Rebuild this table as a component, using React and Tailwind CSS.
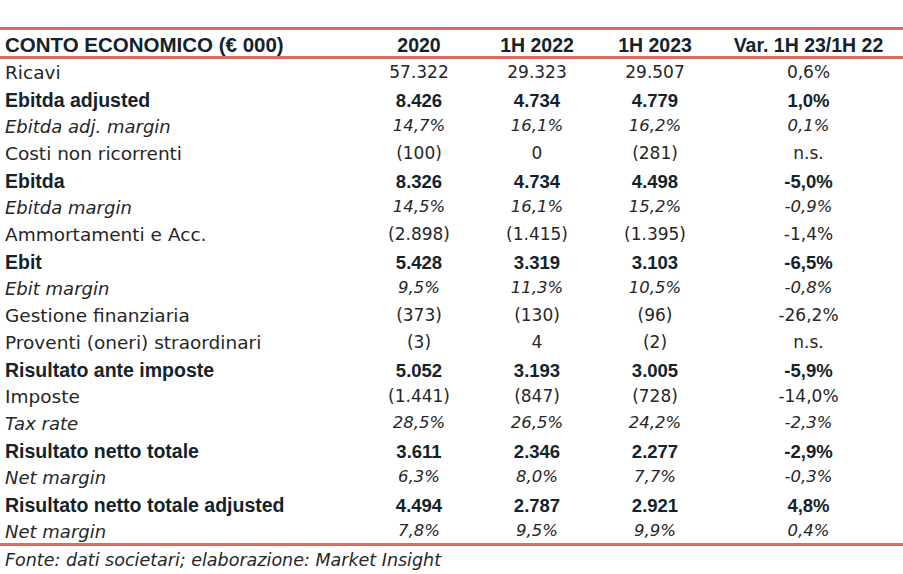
import React from "react";

const rows = [
  { l: "Ricavi", v: ["57.322", "29.323", "29.507", "0,6%"], t: "n" },
  { l: "Ebitda adjusted", v: ["8.426", "4.734", "4.779", "1,0%"], t: "b" },
  { l: "Ebitda adj. margin", v: ["14,7%", "16,1%", "16,2%", "0,1%"], t: "i" },
  { l: "Costi non ricorrenti", v: ["(100)", "0", "(281)", "n.s."], t: "n" },
  { l: "Ebitda", v: ["8.326", "4.734", "4.498", "-5,0%"], t: "b" },
  { l: "Ebitda margin", v: ["14,5%", "16,1%", "15,2%", "-0,9%"], t: "i" },
  { l: "Ammortamenti e Acc.", v: ["(2.898)", "(1.415)", "(1.395)", "-1,4%"], t: "n" },
  { l: "Ebit", v: ["5.428", "3.319", "3.103", "-6,5%"], t: "b" },
  { l: "Ebit margin", v: ["9,5%", "11,3%", "10,5%", "-0,8%"], t: "i" },
  { l: "Gestione finanziaria", v: ["(373)", "(130)", "(96)", "-26,2%"], t: "n" },
  { l: "Proventi (oneri) straordinari", v: ["(3)", "4", "(2)", "n.s."], t: "n" },
  { l: "Risultato ante imposte", v: ["5.052", "3.193", "3.005", "-5,9%"], t: "b" },
  { l: "Imposte", v: ["(1.441)", "(847)", "(728)", "-14,0%"], t: "n" },
  { l: "Tax rate", v: ["28,5%", "26,5%", "24,2%", "-2,3%"], t: "i" },
  { l: "Risultato netto totale", v: ["3.611", "2.346", "2.277", "-2,9%"], t: "b" },
  { l: "Net margin", v: ["6,3%", "8,0%", "7,7%", "-0,3%"], t: "i" },
  { l: "Risultato netto totale adjusted", v: ["4.494", "2.787", "2.921", "4,8%"], t: "b" },
  { l: "Net margin", v: ["7,8%", "9,5%", "9,9%", "0,4%"], t: "i" },
];

const rowCls = {
  n: "font-['DejaVu_Sans',sans-serif] font-normal not-italic text-[#262626]",
  b: "font-['Liberation_Sans',Arial,sans-serif] font-bold not-italic text-[#14232b]",
  i: "font-['DejaVu_Sans',sans-serif] font-normal italic text-[#262626]",
};
const labelCls = {
  n: "text-[18.5px]",
  b: "text-[19.5px]",
  i: "text-[18px]",
};
const valCls = {
  n: "text-[17px]",
  b: "text-[18.5px]",
  i: "text-[16.5px]",
};

export default function App() {
  return (
    <div className="w-[903px] h-[574px] bg-white pt-[27px] font-['DejaVu_Sans',sans-serif] text-[17px]">
      <div className="h-[3px] bg-[#dc6c5f]" />
      <div className="grid grid-cols-[360px_118px_118px_118px_189px] h-[26px] items-center font-['Liberation_Sans',Arial,sans-serif] font-bold text-[#14232b]">
        <div className="pl-[5px] whitespace-nowrap text-[20.5px]">CONTO ECONOMICO (€ 000)</div>
        <div className="text-center text-[19.5px]">2020</div>
        <div className="text-center text-[19.5px]">1H 2022</div>
        <div className="text-center text-[19.5px]">1H 2023</div>
        <div className="text-center text-[19.5px]">Var. 1H 23/1H 22</div>
      </div>
      <div className="h-[3px] bg-[#dc6c5f]" />
      <div className="flex flex-col">
        {rows.map((r, i) => (
          <div
            key={i}
            className={`grid grid-cols-[360px_118px_118px_118px_189px] h-[27px] items-center ${rowCls[r.t]}`}
          >
            <div className={`pl-[5px] whitespace-nowrap ${labelCls[r.t]}`}>{r.l}</div>
            {r.v.map((v, j) => (
              <div key={j} className={`text-center whitespace-nowrap ${valCls[r.t]}`}>
                {v}
              </div>
            ))}
          </div>
        ))}
      </div>
      <div className="h-[3px] mt-[-2px] bg-[#dc6c5f]" />
      <div className="pl-[5px] pt-[1px] italic text-[#262626] text-[17.5px] whitespace-nowrap">
        Fonte: dati societari; elaborazione: Market Insight
      </div>
    </div>
  );
}
